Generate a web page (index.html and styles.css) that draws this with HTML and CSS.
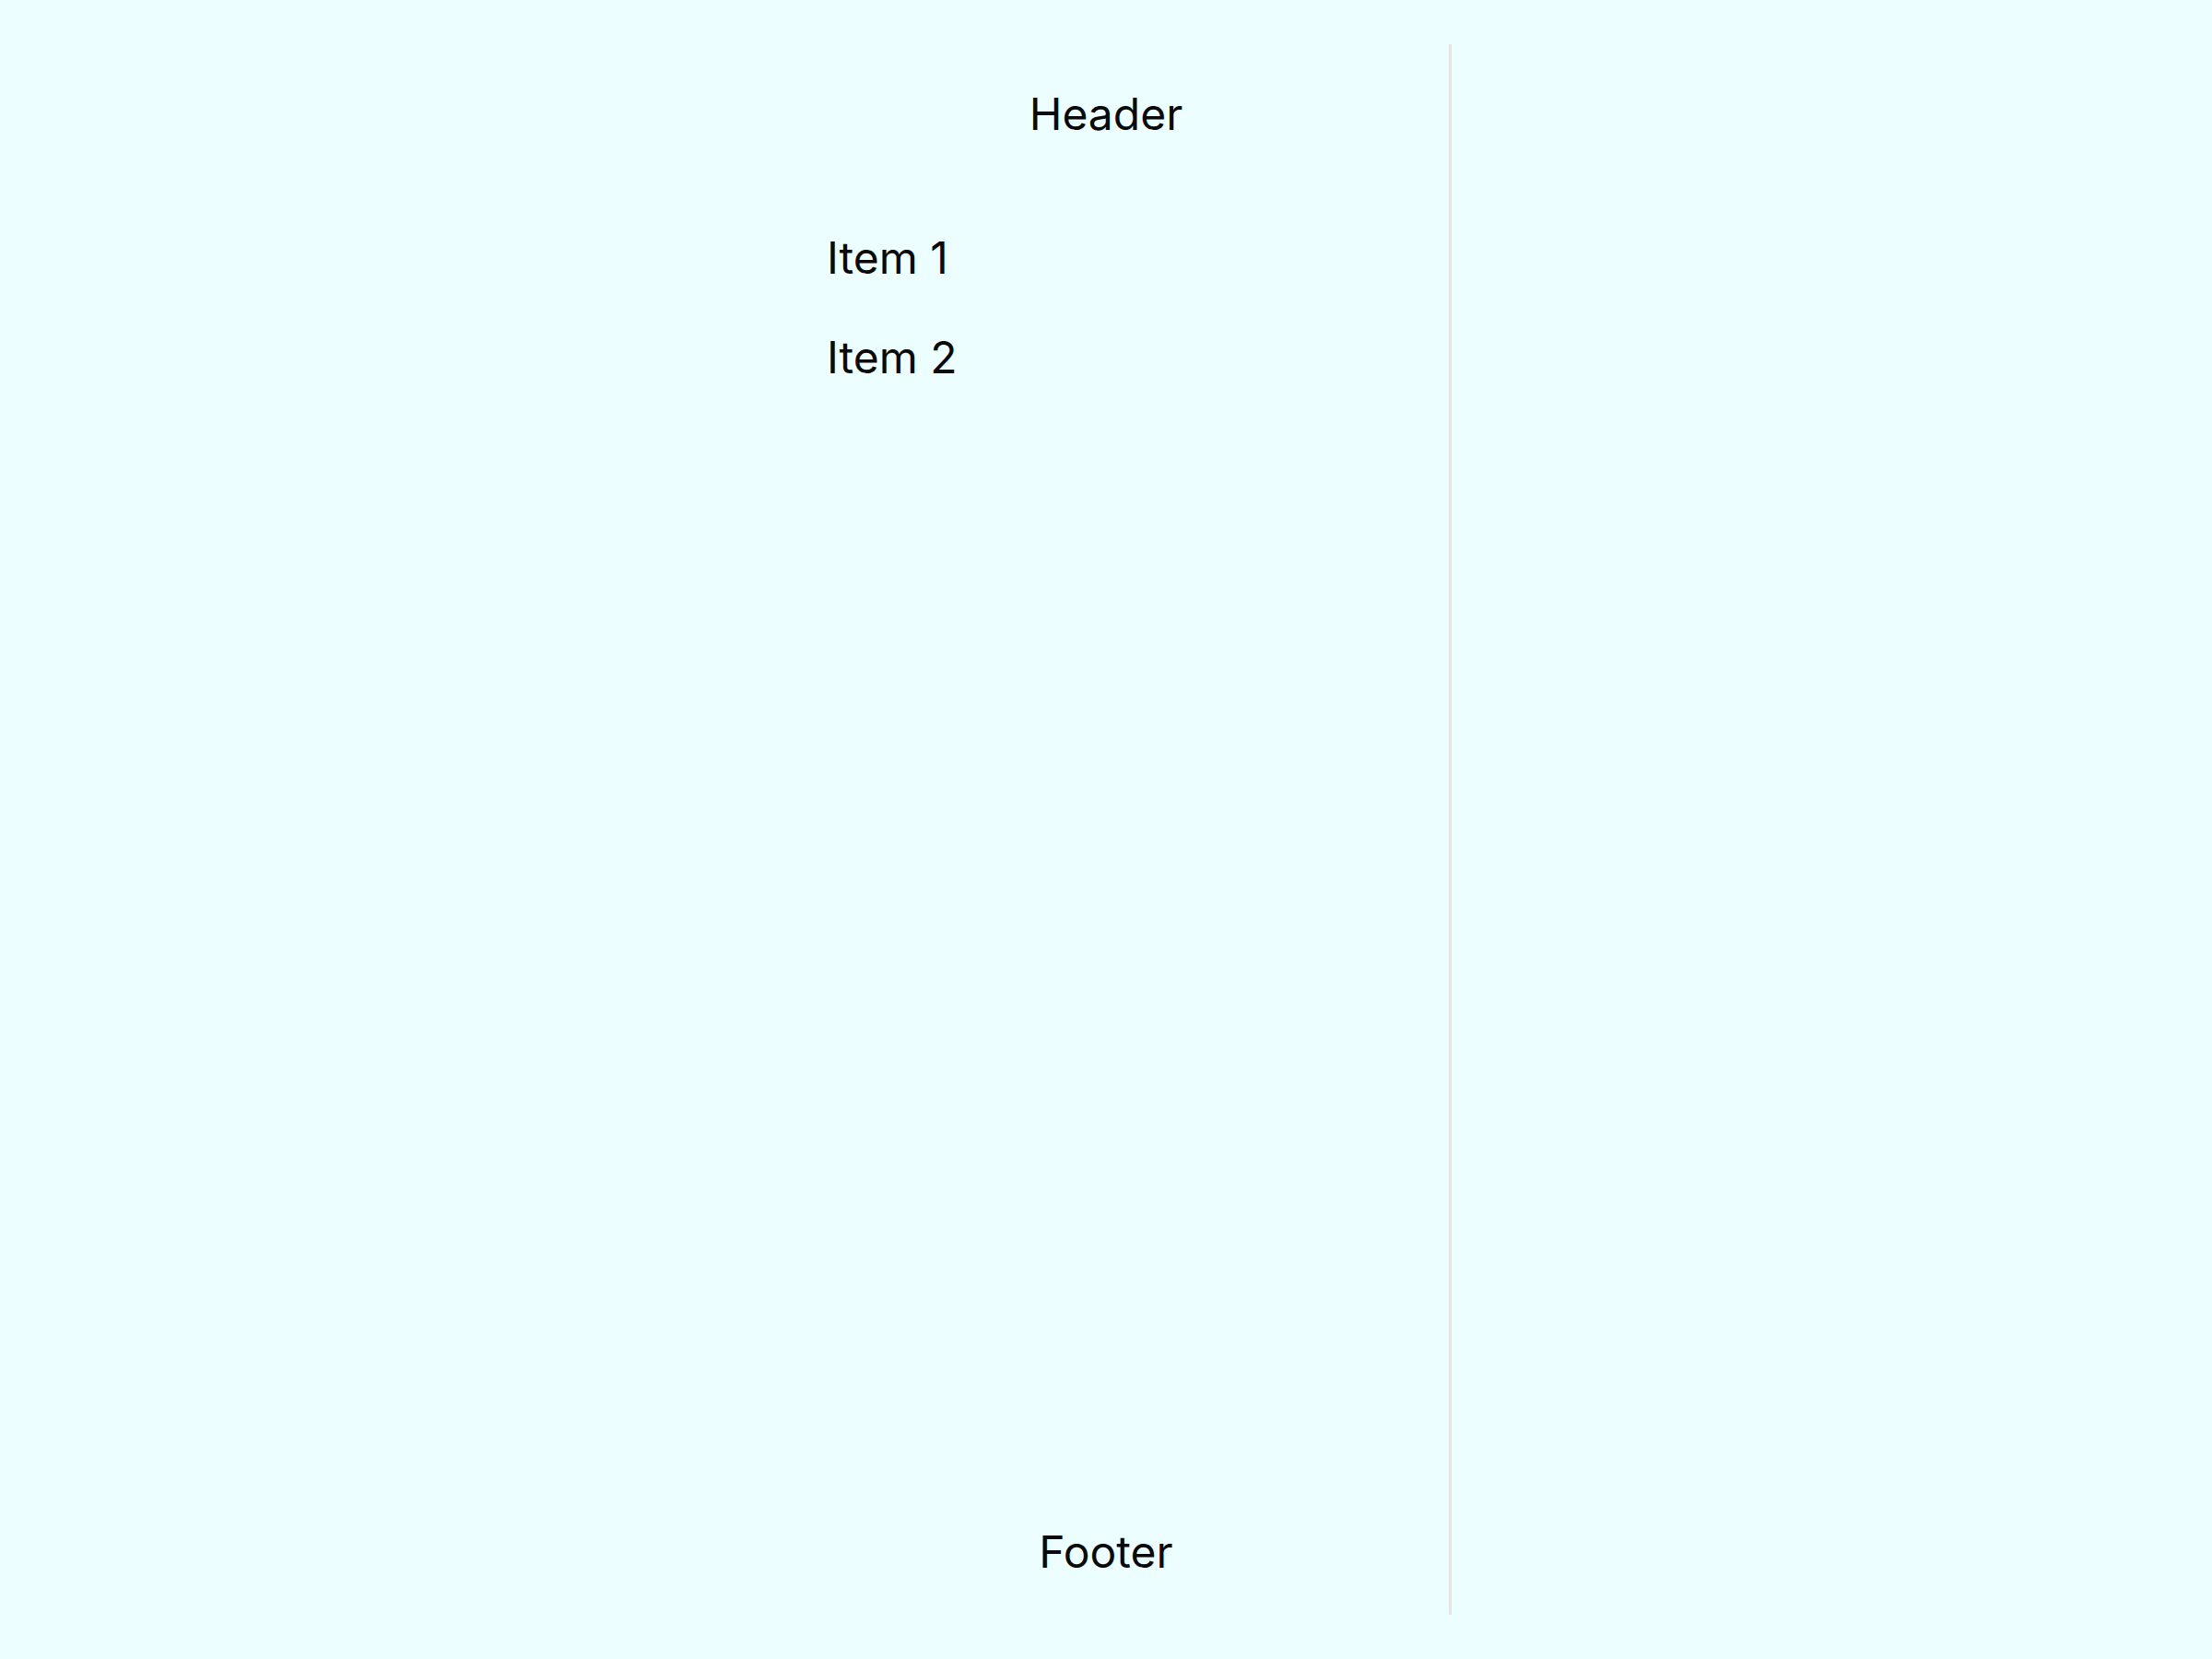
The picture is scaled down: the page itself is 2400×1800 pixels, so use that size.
FILE: index.html
```html
<!DOCTYPE html>
<html lang="en">
<head>
<meta charset="utf-8">
<title>Sidebar</title>
<link rel="stylesheet" href="styles.css">
</head>
<body>
<aside class="sidebar">
<header class="sidebar-header">Header</header>
<ul class="sidebar-list">
<li class="sidebar-item">Item 1</li>
<li class="sidebar-item">Item 2</li>
</ul>
<footer class="sidebar-footer">Footer</footer>
</aside>
</body>
</html>
```
FILE: styles.css
```css
* {
  box-sizing: border-box;
}

body {
  margin: 0;
  min-height: 100vh;
  padding: 48px;
  display: flex;
  justify-content: center;
  background: #ecfeff;
  color: #0a0a0a;
  font-family: Inter, sans-serif;
  font-size: 48px;
  font-weight: 430;
  line-height: 60px;
}

.sidebar {
  width: 100%;
  max-width: 750px;
  display: flex;
  flex-direction: column;
  box-shadow: inset -3px 0 #e5e5e5;
}

.sidebar-header {
  padding: 46px 48px 48px;
  text-align: center;
}

.sidebar-list {
  flex: 1;
  margin: 0;
  padding: 24px;
  list-style: none;
}

.sidebar-item {
  padding: 24px 48px;
}

.sidebar-footer {
  padding: 38px 48px;
  text-align: center;
}
```
